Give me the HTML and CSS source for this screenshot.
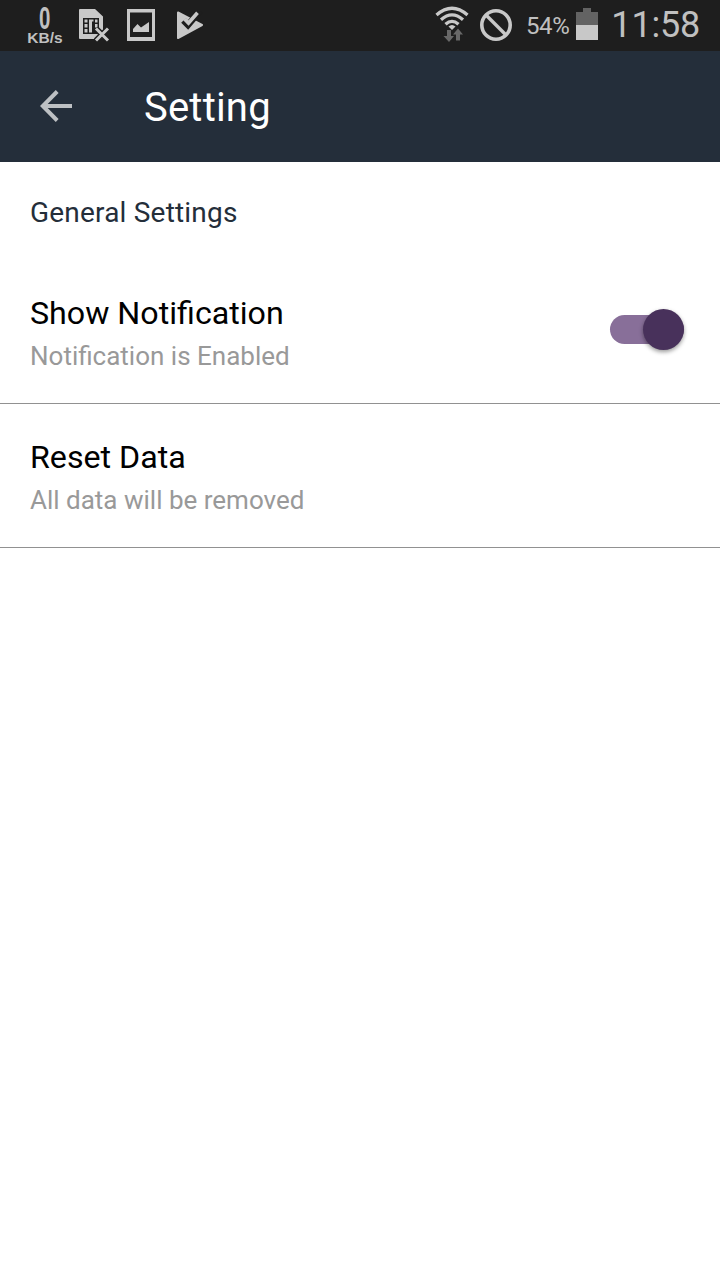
FILE: index.html
```html
<!DOCTYPE html>
<html lang="en">
<head>
    <meta charset="UTF-8">
    <meta name="viewport" content="width=device-width, initial-scale=1.0">
    <title>Setting</title>
    <link rel="stylesheet" href="styles.css">
</head>
<body>
    <div class="status-bar">
        <div class="status-left">
            <div class="net-speed">
                <span class="speed-value">0</span>
                <span class="speed-unit">KB/s</span>
            </div>
            <svg class="icon-sim" width="31" height="34" viewBox="0 0 31 34">
                <path fill="#c8c8c8" fill-rule="evenodd" d="M1 1H16L24 8.500V31H1Q0 31 0 30V2Q0 1 1 1ZM4 10V26H20V10Z"/>
                <path fill="#c8c8c8" d="M5.500 11.500h3v3h-3zM5.500 16h3v3.500h-3zM5.500 21h3v3.500h-3zM10 11.500h4.500v2H13v11h-3zM16 11.500h2.500v3H16zM16 16h2.500v3.500H16z"/>
                <path fill="none" stroke="#1e1e1e" stroke-width="6" d="M17 20.500L29 32.500M29 20.500L17 32.500"/>
                <path fill="none" stroke="#c8c8c8" stroke-width="3" d="M17 20.500L29 32.500M29 20.500L17 32.500"/>
            </svg>
            <svg class="icon-image" width="28" height="32" viewBox="0 0 28 32">
                <path fill="#c8c8c8" fill-rule="evenodd" d="M0 0H28V32H0ZM3 3.500V28H25V3.500Z"/>
                <path fill="#c8c8c8" d="M6 23V20L10.500 15L14 18.500L22 13V23Z"/>
            </svg>
            <svg class="icon-play" width="27" height="29" viewBox="0 0 27 29">
                <path fill="#c8c8c8" stroke="#c8c8c8" stroke-width="2" stroke-linejoin="round" d="M1 1.500L25 14L1 27Z"/>
                <path fill="none" stroke="#1e1e1e" stroke-width="6.500" d="M6.500 9.500L11 14L23 0"/>
                <path fill="none" stroke="#c8c8c8" stroke-width="3.600" d="M7.500 8L11.500 12L20.500 1.800"/>
            </svg>
        </div>
        <div class="status-right">
            <svg class="icon-wifi" width="34" height="36" viewBox="0 0 34 36">
                <g fill="none" stroke="#c8c8c8" stroke-width="3.300">
                    <path d="M1.500 9Q17 -4.500 32.500 9"/>
                    <path d="M6 13.700Q17 4 28 13.700"/>
                    <path d="M10.500 18.300Q17 12.500 23.500 18.300"/>
                </g>
                <path fill="#c8c8c8" d="M13.500 20.500Q17 17.500 20.500 20.500L17 24Z"/>
                <path fill="#686868" d="M12 24h4v6h3l-5 6l-5.500-6H12zM21 34.500V28.500h-3L23 22.500l5 6h-3v6z"/>
            </svg>
            <svg class="icon-block" width="32" height="32" viewBox="0 0 32 32">
                <circle cx="16" cy="16" r="14.200" fill="none" stroke="#c8c8c8" stroke-width="3.600"/>
                <path fill="none" stroke="#c8c8c8" stroke-width="3.400" d="M6 6L26 26"/>
            </svg>
            <span class="battery-text">54%</span>
            <svg class="icon-battery" width="22" height="32" viewBox="0 0 22 32">
                <path fill="#636363" d="M7 0h8v4h7v13H0V4h7z"/>
                <path fill="#c8c8c8" d="M0 17h22v15H0z"/>
            </svg>
            <span class="clock">11:58</span>
        </div>
    </div>

    <div class="app-bar">
        <svg class="icon-back" width="32" height="32" viewBox="0 0 32 32">
            <path fill="none" stroke="#bdc0c3" stroke-width="4" d="M32 16H3M17.200 1.500L2.800 16L17.200 30.500"/>
        </svg>
        <h1>Setting</h1>
    </div>

    <div class="settings">
        <h2>General Settings</h2>
        <div class="item">
            <div class="item-text">
                <div class="item-title">Show Notification</div>
                <div class="item-desc">Notification is Enabled</div>
            </div>
            <div class="switch">
                <div class="thumb"></div>
            </div>
        </div>
        <div class="item">
            <div class="item-text">
                <div class="item-title">Reset Data</div>
                <div class="item-desc">All data will be removed</div>
            </div>
        </div>
    </div>
</body>
</html>
```
FILE: styles.css
```css
body {
    font-family: Roboto, "Noto Sans", sans-serif;
    margin: 0;
    min-height: 100vh;
    background: #fff;
    color: #000;
}
svg {
    display: block;
    flex: none;
}
.status-bar {
    display: flex;
    justify-content: space-between;
    height: 51px;
    background: #1e1e1e;
    color: #c0c0c0;
}
.status-left, .status-right {
    display: flex;
    align-items: flex-start;
}
.net-speed {
    display: flex;
    flex-direction: column;
    align-items: center;
    width: 36px;
    margin-left: 27px;
    font-family: "Liberation Sans", Arial, sans-serif;
    font-weight: bold;
}
.speed-value {
    margin-top: 3px;
    font-size: 31px;
    line-height: 31px;
    transform: scaleX(0.66);
}
.speed-unit {
    margin-top: -4px;
    font-size: 15.5px;
    line-height: 15px;
}
.icon-sim {
    margin: 8px 0 0 16px;
}
.icon-image {
    margin: 9px 0 0 17px;
}
.icon-play {
    margin: 11px 0 0 22px;
}
.icon-wifi {
    margin: 6px 11px 0 0;
}
.icon-block {
    margin: 9px 14px 0 0;
}
.battery-text {
    margin-right: 7px;
    font-size: 24px;
    line-height: 53px;
    letter-spacing: -0.4px;
}
.icon-battery {
    margin: 8px 13px 0 0;
}
.clock {
    margin-right: 20px;
    font-size: 36px;
    line-height: 51px;
    letter-spacing: -0.2px;
}
.app-bar {
    display: flex;
    align-items: center;
    height: 111px;
    padding-left: 40px;
    background: #242e3a;
    color: #fff;
}
.icon-back {
    margin-bottom: 1px;
}
.app-bar h1 {
    margin: 2px 0 0 72px;
    font-size: 40px;
    font-weight: normal;
    line-height: 48px;
    letter-spacing: 0.2px;
}
.settings h2 {
    margin: 0;
    padding: 35px 30px 31px;
    font-size: 28px;
    font-weight: normal;
    line-height: 32px;
    letter-spacing: 0.2px;
    color: #242e3a;
}
.item {
    display: flex;
    justify-content: space-between;
    align-items: flex-start;
    box-sizing: border-box;
    height: 144px;
    padding: 34px 36px 0 30px;
    border-bottom: 1px solid #919191;
}
/* slightly larger size instead of letter-spacing, keeps the fi ligature */
.item-title {
    font-size: 32.2px;
    line-height: 38px;
}
.item-desc {
    margin-top: 8px;
    font-size: 26px;
    line-height: 32px;
    color: #999;
}
.switch {
    display: flex;
    justify-content: flex-end;
    align-items: center;
    width: 74px;
    height: 29px;
    margin-top: 21px;
    border-radius: 15px;
    background: #886f99;
}
.thumb {
    flex: none;
    width: 41px;
    height: 41px;
    border-radius: 50%;
    background: #48315b;
    box-shadow: 0 2px 4px rgba(0, 0, 0, 0.4);
}
```
